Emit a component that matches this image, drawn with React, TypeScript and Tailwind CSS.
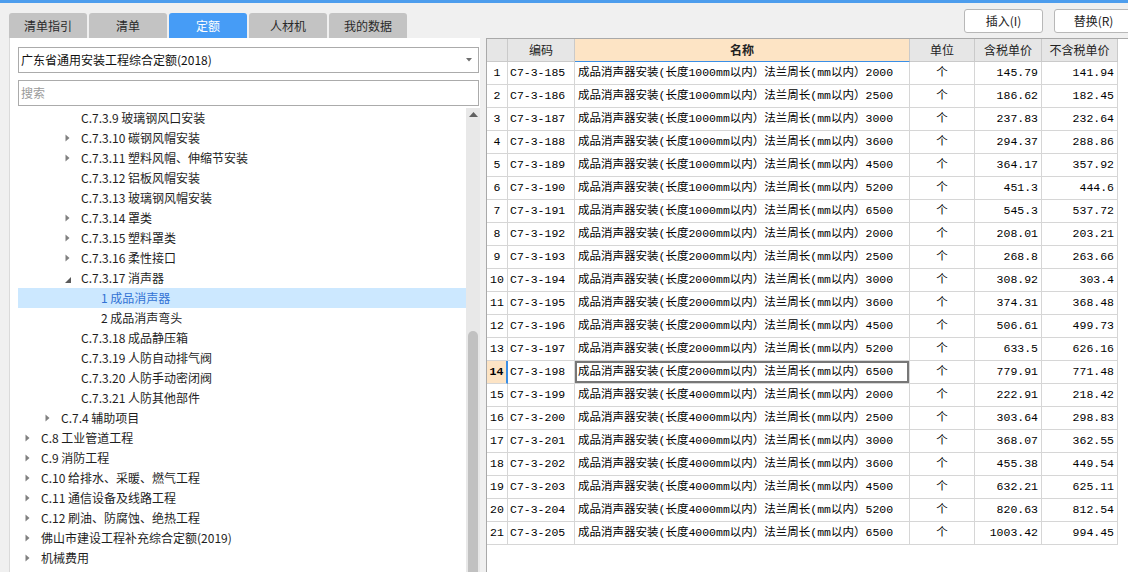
import React from "react";

const tabs = ["清单指引", "清单", "定额", "人材机", "我的数据"];

type TreeNode = {
    label: string;
    level: 1 | 2 | 3 | 4;
    arrow?: "closed" | "open";
    selected?: boolean;
};

const tree: TreeNode[] = [
    { label: "C.7.3.9 玻璃钢风口安装", level: 3 },
    { label: "C.7.3.10 碳钢风帽安装", level: 3, arrow: "closed" },
    { label: "C.7.3.11 塑料风帽、伸缩节安装", level: 3, arrow: "closed" },
    { label: "C.7.3.12 铝板风帽安装", level: 3 },
    { label: "C.7.3.13 玻璃钢风帽安装", level: 3 },
    { label: "C.7.3.14 罩类", level: 3, arrow: "closed" },
    { label: "C.7.3.15 塑料罩类", level: 3, arrow: "closed" },
    { label: "C.7.3.16 柔性接口", level: 3, arrow: "closed" },
    { label: "C.7.3.17 消声器", level: 3, arrow: "open" },
    { label: "1 成品消声器", level: 4, selected: true },
    { label: "2 成品消声弯头", level: 4 },
    { label: "C.7.3.18 成品静压箱", level: 3 },
    { label: "C.7.3.19 人防自动排气阀", level: 3 },
    { label: "C.7.3.20 人防手动密闭阀", level: 3 },
    { label: "C.7.3.21 人防其他部件", level: 3 },
    { label: "C.7.4 辅助项目", level: 2, arrow: "closed" },
    { label: "C.8 工业管道工程", level: 1, arrow: "closed" },
    { label: "C.9 消防工程", level: 1, arrow: "closed" },
    { label: "C.10 给排水、采暖、燃气工程", level: 1, arrow: "closed" },
    { label: "C.11 通信设备及线路工程", level: 1, arrow: "closed" },
    { label: "C.12 刷油、防腐蚀、绝热工程", level: 1, arrow: "closed" },
    { label: "佛山市建设工程补充综合定额(2019)", level: 1, arrow: "closed" },
    { label: "机械费用", level: 1, arrow: "closed" },
];

const indent: Record<number, string> = {
    1: "pl-[7px]",
    2: "pl-[27px]",
    3: "pl-[47px]",
    4: "pl-[67px]",
};

// code suffix, length, perimeter, with tax, without tax
const rows: [number, string, string, string, string][] = [
    [185, "1000", "2000", "145.79", "141.94"],
    [186, "1000", "2500", "186.62", "182.45"],
    [187, "1000", "3000", "237.83", "232.64"],
    [188, "1000", "3600", "294.37", "288.86"],
    [189, "1000", "4500", "364.17", "357.92"],
    [190, "1000", "5200", "451.3", "444.6"],
    [191, "1000", "6500", "545.3", "537.72"],
    [192, "2000", "2000", "208.01", "203.21"],
    [193, "2000", "2500", "268.8", "263.66"],
    [194, "2000", "3000", "308.92", "303.4"],
    [195, "2000", "3600", "374.31", "368.48"],
    [196, "2000", "4500", "506.61", "499.73"],
    [197, "2000", "5200", "633.5", "626.16"],
    [198, "2000", "6500", "779.91", "771.48"],
    [199, "4000", "2000", "222.91", "218.42"],
    [200, "4000", "2500", "303.64", "298.83"],
    [201, "4000", "3000", "368.07", "362.55"],
    [202, "4000", "3600", "455.38", "449.54"],
    [203, "4000", "4500", "632.21", "625.11"],
    [204, "4000", "5200", "820.63", "812.54"],
    [205, "4000", "6500", "1003.42", "994.45"],
];

function Arrow({ type }: { type?: "closed" | "open" }) {
    return (
        <div className="w-[16px] h-full flex items-center shrink-0">
            {type === "closed" && (
                <svg width="5" height="8" viewBox="0 0 5 8">
                    <path d="M0.5 0.5 L4.5 4 L0.5 7.5 Z" fill="#808080" />
                </svg>
            )}
            {type === "open" && (
                <svg width="6" height="6" viewBox="0 0 6 6" className="mt-[3px]">
                    <path d="M6 0 L6 6 L0 6 Z" fill="#5a5a5a" />
                </svg>
            )}
        </div>
    );
}

function LeftPanel(): JSX.Element {
    return (
        <div className="w-[471px] ml-[9px] bg-white border-l border-[#dadada] flex flex-col pt-[9px] pl-[8px]">
            <div className="h-[26px] mr-[1px] border border-[#ababab] flex items-center pl-[2px] pr-[6px] text-[12px] text-[#111]">
                <span className="flex-1">{"广东省通用安装工程综合定额(2018)"}</span>
                <svg width="6" height="4" viewBox="0 0 6 4">
                    <path d="M0 0 L6 0 L3 3.5 Z" fill="#6e6e6e" />
                </svg>
            </div>
            <div className="h-[26px] mt-[7px] mr-[1px] border border-[#ababab] flex items-center pl-[2px] text-[12px] text-[#9a9a9a]">
                {"搜索"}
            </div>
            <div className="mt-[2px] flex-1 flex min-h-0">
                <div className="flex-1 overflow-hidden">
                    {tree.map((n, i) => (
                        <div
                            key={i}
                            className={`h-[20px] flex items-center text-[12px] whitespace-nowrap ${indent[n.level]} ${
                                n.selected ? "bg-[#cce8ff] text-[#3373d4]" : "text-[#1e1e1e]"
                            }`}
                        >
                            <Arrow type={n.arrow} />
                            <span>{n.label}</span>
                        </div>
                    ))}
                </div>
                <div className="w-[14px] bg-[#e8e8e8] flex flex-col items-center">
                    <svg width="9" height="5" viewBox="0 0 9 5" className="mt-[4px]">
                        <path d="M0 5 L4.5 0 L9 5 Z" fill="#606060" />
                    </svg>
                    <div className="mt-auto h-[241px] w-[10px] rounded-t-[5px] bg-[#c1c1c1]" />
                </div>
            </div>
        </div>
    );
}

const cell = "shrink-0 h-full border-r border-b border-[#d6d6d6] flex items-center";

function RightPanel(): JSX.Element {
    return (
        <div className="ml-[6px] flex-1 bg-white border-l border-t border-[#a9a9a9]">
            <div className="flex h-[23px] w-[631px] bg-[#e6e6e6] text-[12px] text-[#222]">
                <div className="shrink-0 w-[21px] h-full border-r border-b border-[#cacaca]" />
                <div className="shrink-0 w-[67px] h-full border-r border-b border-[#cacaca] flex items-center justify-center">
                    {"编码"}
                </div>
                <div className="shrink-0 w-[335px] h-full border-r border-[#cacaca] border-b border-b-[#3a8ee6] bg-[#fde4c5] flex items-center justify-center font-bold">
                    {"名称"}
                </div>
                <div className="shrink-0 w-[65px] h-full border-r border-b border-[#cacaca] flex items-center justify-center">
                    {"单位"}
                </div>
                <div className="shrink-0 w-[67px] h-full border-r border-b border-[#cacaca] flex items-center justify-center">
                    {"含税单价"}
                </div>
                <div className="shrink-0 w-[76px] h-full border-r border-b border-[#cacaca] flex items-center justify-center">
                    {"不含税单价"}
                </div>
            </div>
            <div className="font-['Liberation_Mono','Noto_Sans_CJK_SC',monospace] text-[11.5px] text-black">
                {rows.map((r, i) => {
                    const active = i === 13;
                    return (
                        <div key={i} className="flex h-[23px] w-[631px]">
                            <div
                                className={`${cell} w-[21px] justify-center ${
                                    active ? "bg-[#fde4c5] font-bold border-r-2 border-r-[#3a8ee6]" : ""
                                }`}
                            >
                                {i + 1}
                            </div>
                            <div className={`${cell} w-[67px] pl-[2px]`}>{"C7-3-" + r[0]}</div>
                            <div
                                className={`${cell} w-[335px] pl-[3px] whitespace-nowrap ${
                                    active ? "shadow-[inset_0_0_0_2px_#777777]" : ""
                                }`}
                            >
                                {`成品消声器安装(长度${r[1]}mm以内）法兰周长(mm以内）${r[2]}`}
                            </div>
                            <div className={`${cell} w-[65px] justify-center`}>{"个"}</div>
                            <div className={`${cell} w-[67px] justify-end pr-[3px]`}>{r[3]}</div>
                            <div className={`${cell} w-[76px] justify-end pr-[3px]`}>{r[4]}</div>
                        </div>
                    );
                })}
            </div>
        </div>
    );
}

export default function App(): JSX.Element {
    return (
        <div className="w-[1128px] h-[572px] bg-[#f0f0f0] border-t-[3px] border-[#4d9ded] overflow-hidden flex flex-col font-['Noto_Sans_CJK_SC',sans-serif]">
            <div className="h-[35px] flex shrink-0">
                <div className="flex items-end gap-[2px] pl-[9px]">
                    {tabs.map((t) => (
                        <div
                            key={t}
                            className={`w-[78px] h-[25px] rounded-t-[3px] flex items-center justify-center text-[12px] ${
                                t === "定额" ? "bg-[#469cf6] text-white" : "bg-[#c3c3c3] text-[#2a2a2a]"
                            }`}
                        >
                            {t}
                        </div>
                    ))}
                </div>
                <div className="ml-auto flex gap-[11px] pt-[6px] mr-[-5px]">
                    <div className="w-[79px] h-[24px] bg-white border border-[#b8b8b8] rounded-[3px] flex items-center justify-center text-[12px] text-[#222]">
                        {"插入(I)"}
                    </div>
                    <div className="w-[79px] h-[24px] bg-white border border-[#b8b8b8] rounded-[3px] flex items-center justify-center text-[12px] text-[#222]">
                        {"替换(R)"}
                    </div>
                </div>
            </div>
            <div className="flex-1 flex min-h-0">
                <LeftPanel />
                <RightPanel />
            </div>
        </div>
    );
}
